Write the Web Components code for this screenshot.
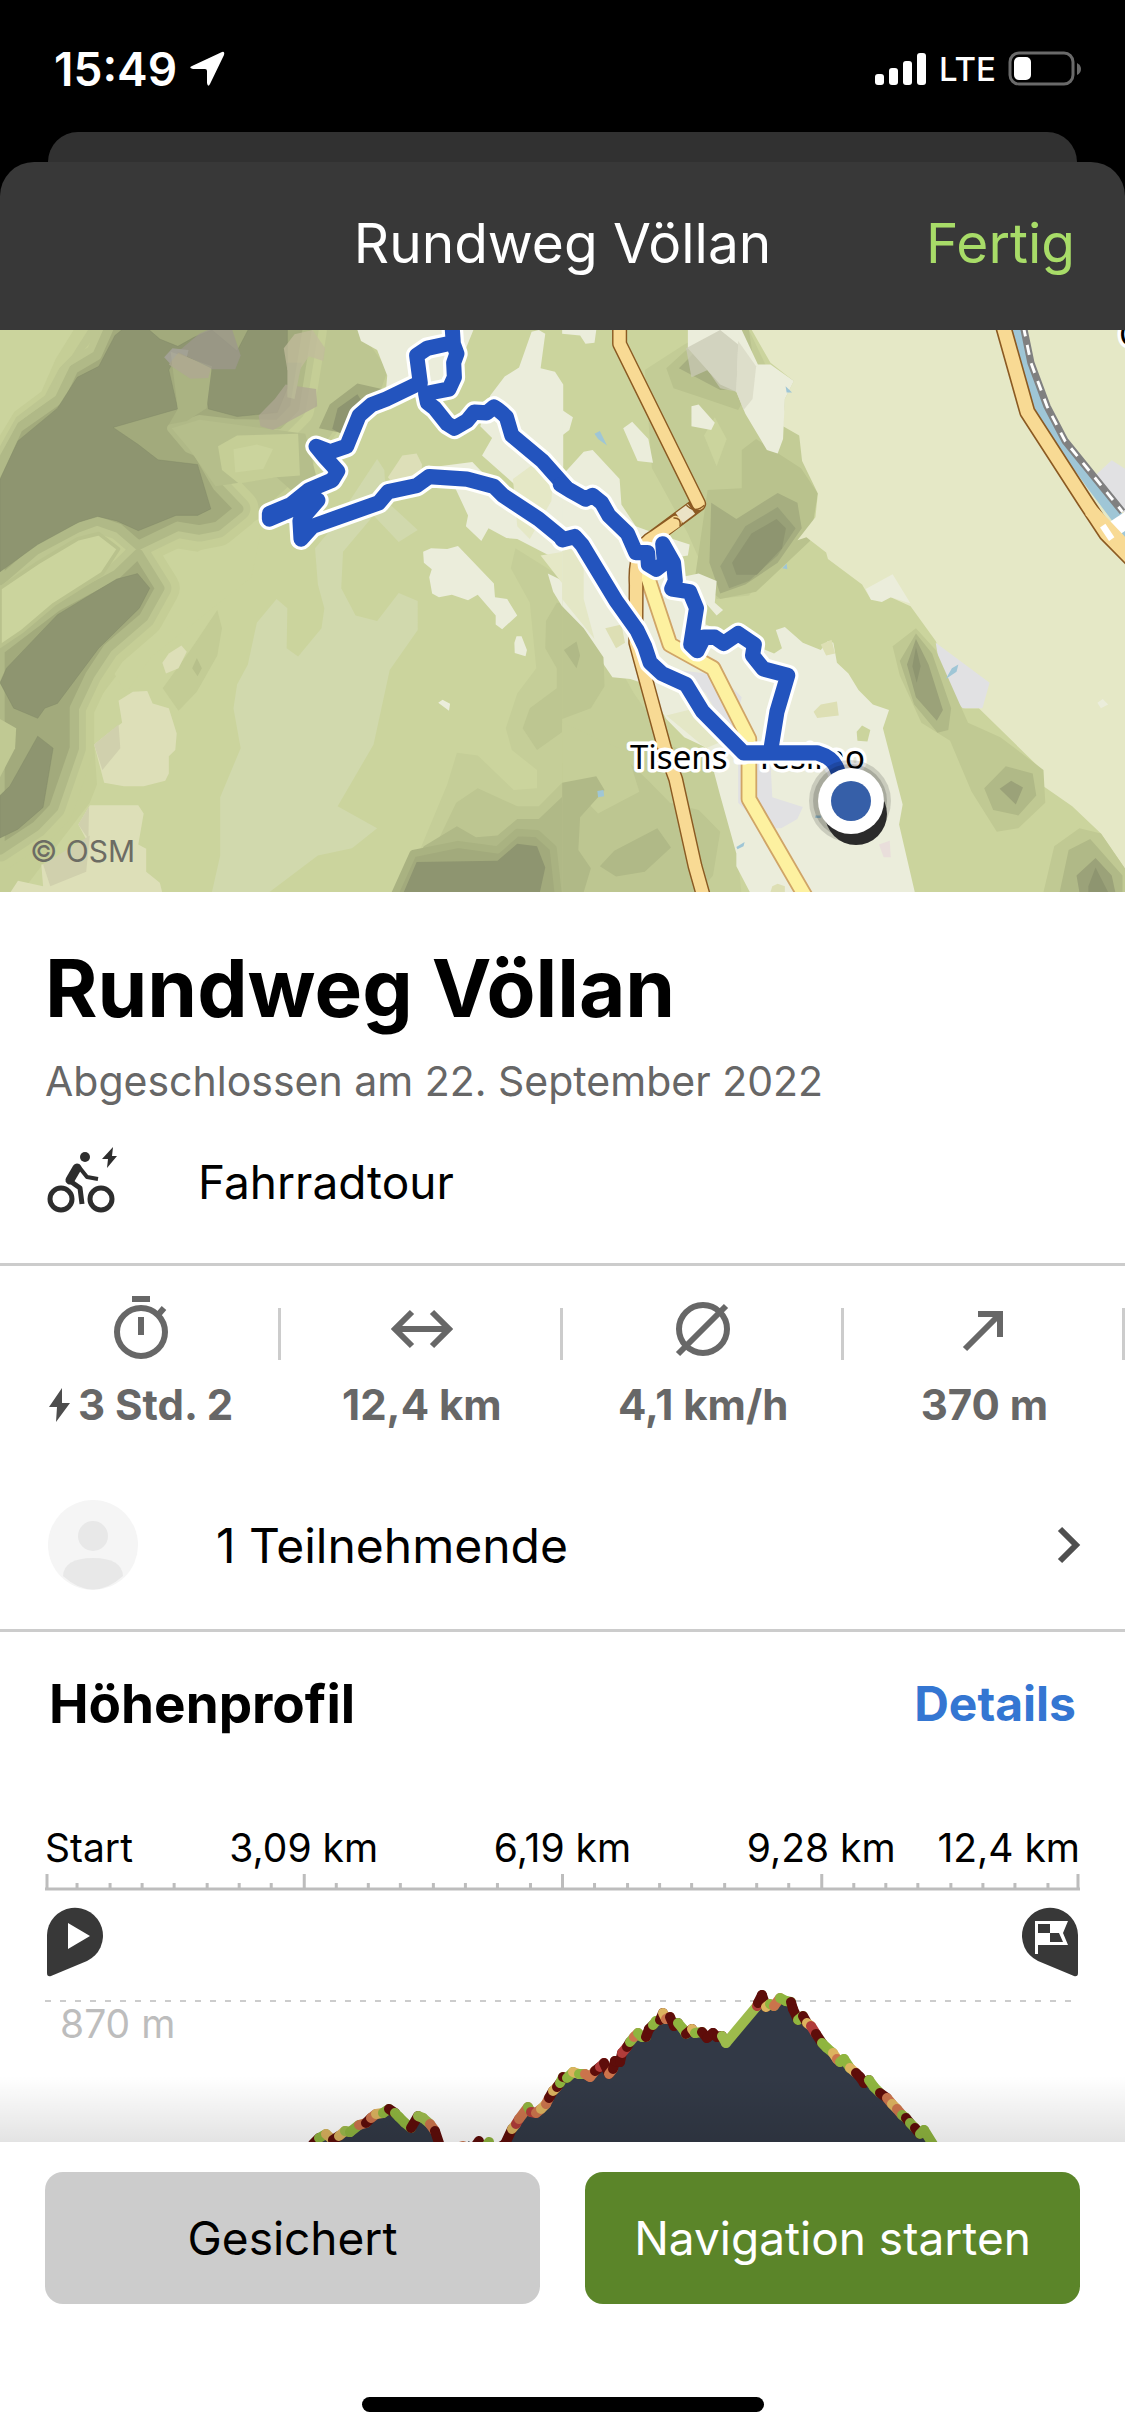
<!DOCTYPE html>
<html lang="de">
<head>
<meta charset="utf-8">
<meta name="viewport" content="width=device-width, initial-scale=1">
<title>Rundweg Völlan</title>
<style>
  html, body {
    margin: 0;
    height: 100%;
  }

  body {
    display: flex;
    flex-direction: column;
    background: #fff;
    color: #000;
    font-family: Inter, "Liberation Sans", sans-serif;
  }

  main {
    flex: 1;
    min-height: 0;
    overflow: hidden;
  }
</style>
</head>
<body>
  <phone-status>15:49</phone-status>
  <sheet-header>Rundweg Völlan<button slot="action">Fertig</button></sheet-header>
  <main>
    <tour-map></tour-map>
    <tour-summary>
      Rundweg Völlan
      <span slot="date">Abgeschlossen am 22. September 2022</span>
      <span slot="sport">Fahrradtour</span>
    </tour-summary>
    <tour-stats>
      <tour-stat icon="time" boost>3 Std. 2</tour-stat>
      <tour-stat icon="distance">12,4 km</tour-stat>
      <tour-stat icon="speed">4,1 km/h</tour-stat>
      <tour-stat icon="uphill">370 m</tour-stat>
    </tour-stats>
    <tour-people>1 Teilnehmende</tour-people>
    <elevation-profile>Höhenprofil<a slot="link" href="#details">Details</a></elevation-profile>
  </main>
  <action-bar>
    <button>Gesichert</button>
    <button class="primary">Navigation starten</button>
  </action-bar>

<script>
// tour.js

const define = (name, html, setup) => {
  const template = document.createElement('template')
  template.innerHTML = html
  customElements.define(name, class extends HTMLElement {
    constructor() {
      super()
      this.attachShadow({mode: 'open'})
      this.shadowRoot.appendChild(template.content.cloneNode(true))
    }

    connectedCallback() {
      if (setup) setup(this, this.shadowRoot)
    }
  })
}

define('phone-status', `
  <style>
    :host {
      display: flex;
      justify-content: space-between;
      align-items: center;
      box-sizing: border-box;
      height: 132px;
      padding: 6px 43px 0 54px;
      background: #000;
      color: #fff;
      font-size: 46px;
      font-weight: 600;
    }
    div { display: flex; align-items: center; gap: 12px; }
    .net { font-size: 33px; font-weight: 500; }
    svg { display: block; }
  </style>
  <div>
    <slot></slot>
    <svg width="36" height="36" viewBox="0 0 36 36" fill="#fff"><path d="M33 1Q36 0 35 4L21 33Q19 37 18 32V20Q18 18 16 18H4Q-1 17 3 15Z"/></svg>
  </div>
  <div class="net">
    <svg width="52" height="34" viewBox="0 0 52 34" fill="#fff">
      <rect y="22" width="9" height="11" rx="3"/><rect x="14" y="16" width="9" height="17" rx="3"/>
      <rect x="28" y="9" width="9" height="24" rx="3"/><rect x="42" y="1" width="9" height="32" rx="3"/>
    </svg>
    <span>LTE</span>
    <svg width="74" height="36" viewBox="0 0 74 36">
      <rect x="2" y="2" width="63" height="31" rx="9" fill="none" stroke="#6a6a6a" stroke-width="3"/>
      <rect x="6" y="6" width="17" height="23" rx="5" fill="#fff"/>
      <path d="M69 12Q73 14 73 18T69 24Z" fill="#6a6a6a"/>
    </svg>
  </div>
`)

define('sheet-header', `
  <style>
    :host { display: block; background: #000; font-size: 55px; color: #fff; }
    .behind { height: 30px; margin: 0 48px; border-radius: 30px 30px 0 0; background: #313131; }
    header {
      display: grid;
      grid-template-columns: 1fr auto 1fr;
      align-items: center;
      height: 162px;
      padding: 0 50px 6px;
      border-radius: 34px 34px 0 0;
      background: #383838;
    }
    h2 { grid-column: 2; margin: 0; font-size: inherit; font-weight: 400; }
    ::slotted(button) {
      justify-self: end;
      padding: 0;
      border: 0;
      background: none;
      color: #a8dc68;
      font: inherit;
    }
  </style>
  <div class="behind"></div>
  <header><h2><slot></slot></h2><slot name="action"></slot></header>
`)

// Terrain and route share one sheet of 3133 x 1546 units; the right half starts at 1565.
define('tour-map', `
  <style>
    :host { display: block; position: relative; height: 562px; overflow: hidden; background: #cbd49d; }
    svg { display: block; width: 100%; height: 100%; }
    small { position: absolute; left: 30px; bottom: 24px; font-size: 30px; line-height: 34px; color: #6c6c64; }
  </style>
  <svg viewBox="0 0 1125 562" preserveAspectRatio="xMidYMid slice" role="img" aria-label="Karte">
    <defs>
      <g id="route" fill="none" stroke-linejoin="round" stroke-linecap="round">
        <path d="M1575 432L1510 360 1425 290 1410 240Q1390 220 1375 212L1355 228 1320 226 1300 250 1265 270 1245 258 1210 215 1190 200 1185 175 1250 162 1265 130 1263 90 1272 65 1262 38 1258-20M1255 36L1190 50 1160 70 1170 145 1075 190 1035 205 1000 235 965 320 920 335 880 320 905 350 940 388 925 413 860 440 810 480 750 505V520L815 492 870 460 885 468 835 525 838 575 870 540 1055 475 1080 445 1160 428 1195 403 1300 410 1375 430 1400 455 1500 520 1568 575"/>
        <g transform="translate(1565)">
          <path d="M-5 425L20 440 65 465 85 455 110 475 130 510 182 560 205 612 238 612 240 645 262 658 285 640 280 588 310 640 315 690 305 712 355 720 374 765 358 865 376 882 395 845 425 845 450 862 490 835 535 865 530 895 560 932 628 950 598 1050 580 1160M0 577L35 568 55 590 150 745 208 825 230 870 245 915 278 945 345 975 390 1048 505 1163H710Q750 1175 762 1200L800 1290"/>
        </g>
      </g>
      <path id="nw" d="M0-20V380L50 270 165 190 205 108 270 70 310 -20H855V0L820 215 775 260 650 258 555 247 478 270 525 325 550 335 605 430 665 492 605 540 555 550 495 540 385 592 330 545 270 525 215 545 100 605 0 690Z"/>
      <path id="west" d="M0 880L160 760 325 672 385 615 445 710 400 790 300 875 250 950 207 1040V1150L150 1313 100 1365 0 1430Z"/>
      <path id="southeast" d="M1095 1560L1150 1440 1275 1415 1385 1430 1440 1382 1495 1385 1540 1425 1555 1560Z"/>
    </defs>
    <g transform="scale(.3592 .3636)" stroke-linejoin="round">
      <!-- relief west -->
      <path fill="#c5ce96" d="M0 0V1546H60L250 1300 270 1250 255 1040 340 930 460 800 520 650 735 510 820 440 1000 200 1080 150V0Z"/>
      <path fill="#cbd49d" d="M385 592L490 600 550 610 720 520 735 510 700 680 420 900 350 1000 310 930 455 710 460 660Z"/>
      <path fill="#bdc691" d="M560 0H1000L1080 110 1060 165 940 260 860 380 735 490 600 540 500 400Z"/>
      <g fill="none" stroke-width="110" stroke="#c5ce96"><use href="#nw"/><use href="#west"/></g>
      <g fill="none" stroke-width="64" stroke="#bdc691"><use href="#nw"/><use href="#west"/></g>
      <g stroke-width="26" stroke="#b0b987" fill="#a2aa7c"><use href="#nw"/><use href="#west"/></g>
      <path fill="#cbd49d" stroke="#b9c28d" stroke-width="10" d="M0 710L105 640 215 575 275 560 330 602 285 670 150 755 60 830 0 870Z"/>
      <path fill="#bdc691" d="M0 0H280L205 90 165 125 140 190 50 255 0 345Z"/>
      <path fill="#c5ce96" d="M0 0H245L200 70 165 105 125 180 45 240 0 320Z"/>
      <path fill="#cbd49d" d="M0 0H205L155 80 115 170 40 225 0 290Z"/>
      <path fill="#c0c993" d="M0 1070L45 1095 42 1150 0 1230Z"/>
      <g fill="#8e9570" stroke="#7f8765">
        <path d="M0 410L50 305 160 215 215 130 275 100 320 15 345-5H410L445 25 495 45 540 20 590 0 660 58 693-5H800V160L772 227 660 238 580 217 573 160 588 105 495 62 470 110 495 217 315 268 385 315 440 357 550 370 587 492 550 510 490 510 385 552 325 525 272 513 220 528 105 590 0 665Z"/>
        <path d="M325 685L383 670 417 710 388 765 275 875 160 1027 125 1040 105 1068 38 1040 0 970 18 930 160 783 240 735Z"/>
        <path d="M105 1117L148 1150 120 1313 50 1373 0 1397V1280L27 1255Z"/>
      </g>
      <path fill="#aab382" d="M475 60L590 100 575 215 520 250 470 260 495 217Z"/>
      <path fill="#b5be8b" d="M478 270L555 247 850 285 880 400 810 440 770 405 600 430 525 325Z"/>
      <path fill="#c5ce96" d="M607 320L660 290 830 285 835 400 770 405 665 422 618 385Z"/>
      <path fill="#cbd49d" d="M650 328L715 315 760 327 733 382 655 392Z"/>
      <path fill="#a2aa7c" d="M888 270L918 205 995 147 1075 165 1020 200 985 290Z"/>
      <path fill="#8e9570" d="M925 272L940 215 995 177 1010 200 960 290Z"/>
      <g fill="#b0a894" opacity=".75">
        <path fill="#9d988d" d="M495 60L555 10 590-5H645L670 70 655 108 590 108Z"/>
        <path fill="#a9a5a0" d="M457 75L480 50 525 55 520 75 480 100Z"/>
        <path d="M470 95L497 62 587 105 580 132 530 134Z"/>
        <path fill="#c2bc9c" d="M790 50L820 12 870 0 905 50 900 85 860 72 820 130 800 110Z"/>
        <path d="M720 235L765 190 795 150 880 162 883 210 760 275 725 265Z"/>
        <path fill="#bcb89c" d="M800 90H840L820 190 800 185Z"/>
      </g>
      <!-- valley floor -->
      <path fill="#d1d9ad" d="M770 740L800 765 798 875 830 898 895 820 903 765 885 700 877 600 920 550 1050 355 1070 385 1075 470 1163 550 1110 583 1040 510 955 610 950 710 990 785 1050 800 1110 723 1163 745V825L1085 935 1040 1140 940 1310 1050 1370 980 1425 885 1445 750 1546H590L613 1445V1285L670 1150 650 1040 660 975 690 920 715 805Z"/>
      <path fill="#c3cc95" d="M605 770L618 820 605 895 548 995 497 1047 453 985 530 880Z"/>
      <path fill="#b7c08b" d="M548 902L562 930 550 952 535 930Z"/>
      <path fill="#c5ce98" d="M1435 600L1580 690V1546H1120L1245 1250 1272 1163 1330 1170 1430 1265 1495 1260V1210L1425 1155 1408 1095 1440 1000 1493 930 1475 750 1422 655Z"/>
      <path fill="#bdc691" d="M1580 750H1550L1520 800 1518 875 1550 930V985L1475 1040 1455 1095 1495 1155 1580 1095Z"/>
      <path fill="#bdc691" d="M1270 1300L1330 1260 1440 1310H1500L1580 1230V1546H1150Z"/>
      <path fill="#b0b987" d="M1180 1420L1272 1365 1325 1395 1385 1390 1440 1345H1500L1580 1270V1546H1100Z"/>
      <g stroke-width="20" stroke="#a9b281" fill="#a2aa7c"><use href="#southeast"/></g>
      <path fill="#8e9570" d="M1118 1560L1160 1463 1385 1460 1440 1413 1495 1420 1518 1478 1500 1560Z"/>
      <g fill="#dddfb8">
        <path d="M330 1020L370 995 410 993 425 1027 470 1040 492 1110 488 1155 470 1172V1220L460 1240 400 1255H345L290 1245 262 1140 300 1110 340 1080Z"/>
        <path d="M250 1307H385L400 1330 385 1415 407 1427V1490L445 1520 455 1560H20L50 1515 120 1530 115 1470 180 1465 245 1410 218 1360Z"/>
        <path d="M452 915L470 890 505 868 520 885 497 930 462 945Z"/>
        <path d="M1080 405L1120 345 1160 340 1175 370 1170 420 1100 430Z"/>
      </g>
      <path fill="#d0d0ad" d="M262 1140L330 1085 335 1150 285 1210ZM120 1470L250 1390 240 1490 140 1530ZM218 1360L248 1310 246 1400Z"/>
      <!-- villages -->
      <g fill="#ebeddb">
        <path d="M995 0L1005 30 1050 55 1078 125 1075 160 1170 150 1180 190 1250 165 1320-5H995Z"/>
        <path d="M1480 5L1500 0 1518 10 1505 105 1545 115 1568 150V640L1440 575 1410 572 1360 545 1340 580 1297 540 1303 510 1265 430 1180 380 1315 363 1410 460 1450 440 1342 345 1370 297 1337 265 1365 180 1405 128 1445 103Z"/>
        <path d="M1178 610L1200 600 1245 602 1275 594 1375 697 1378 735 1412 740 1440 785 1398 823 1380 810V785L1330 728 1303 743 1258 728 1222 735 1203 725 1195 680 1202 658 1180 640Z"/>
        <path d="M1432 860L1438 842H1452L1467 880 1463 897 1433 888ZM1220 1025L1232 1017 1253 1028 1250 1047Z"/>
        <path d="M1525 670L1568 690V765L1540 720Z"/>
      </g>
      <path fill="#e5e8c6" d="M1428 410L1490 365 1540 400 1535 470 1475 575 1440 540ZM1505 620L1568 610V700Z"/>

      <g transform="translate(1565)">
        <path fill="#c5ce98" d="M0 690L120 860 200 1000 300 1140 420 1200 480 1350 500 1560H0Z"/>
        <path fill="#c3cc96" d="M230 110L340 40 420 0H520L660 290 712 450 650 575 520 730 430 740 350 560 250 380Z"/>
        <path fill="#cbd49d" d="M395 290L425 240 458 300 430 375Z"/>
        <path fill="#b9c28d" d="M290 105L340 60 420 0H520L540 130 490 220 400 190 310 160ZM500 330L540 300 665 380 712 450 690 580 540 720 440 740 370 680 405 440 500 435Z"/>
        <path fill="#a6ae80" d="M325 105L360 70 420 0H480L500 160 440 165ZM415 475L485 520 600 448 655 475 667 545 600 640 510 700 440 725 410 640Z"/>
        <path fill="#99a178" d="M440 650L510 540 600 487 650 545 600 620 520 690 465 710Z"/>
        <path fill="#8e9570" d="M473 640L527 560 597 520 623 545 612 600 542 673H485Z"/>
        <!-- meadows by the river -->
        <path fill="#e5e8c6" d="M525-5L580 90 645 140 620 190 615 265 660 290 668 360 712 450 705 515 655 578 680 570 735 612 740 630 835 700 860 742 915 735 970 760 1040 855 1120 1040H1160L1325 1200 1340 1255 1420 1310 1500 1385 1580 1500V-5Z"/>
        <path fill="#ebeddb" d="M0-5H60L95 0 90 35 65 38 50 15 0 10ZM0 220L30 240 20 275 0 290ZM360 210L380 205 425 255 415 275 360 265ZM170 270L195 252 240 300 253 365 210 360ZM270 0H350V50L440 150 485 170 510 230 570 330 600 340 615 300 620 190 645 140 580 95H545L500 0Z"/>
        <path fill="#c9c9b6" opacity=".75" d="M345 50L440 0 490 40 485 170 440 160 405 110 360 130Z"/>
        <path fill="#d9dac6" opacity=".8" d="M490 30L540 100 530 190 505 220 485 170Z"/>
        <path fill="#ebeddb" d="M0 400L60 335 85 330 160 410 165 480 205 540 260 560 355 590 350 620 320 625 330 680 380 670 430 690 425 750 448 770 430 785 395 745 400 810 590 890 612 875 595 825 620 817 670 860 720 880 740 855 755 860 765 915 797 945 825 990 865 1030 910 1045 893 1095 948 1305 938 1360 985 1560H530L485 1475V1440L440 1280 405 1150 340 1120 290 1070 235 975 190 960 140 955 95 890 0 760Z"/>
        <path fill="#e4e7c6" d="M0 560L60 620 60 740 90 850 0 740ZM290 1060L370 1040 450 1130 400 1150Z"/>
        <g fill="#e1e1e3">
          <path d="M325 935L440 950 500 1010 470 1120 400 1000ZM545 1160L580 1190 585 1285 670 1312 655 1345 610 1370H560L490 1300V1190ZM1040 860L1190 970 1170 1040H1115L1060 980ZM1490 395L1530 358 1580 390V520L1480 410Z"/>
        </g>
        <path fill="#ebeddb" d="M845 712L920 672 970 752 915 735 890 748 860 742ZM1490 1025L1505 1015 1520 1030 1500 1040Z"/>
        <path fill="#dddfb4" d="M700 1050L720 1030 765 1022 770 1060 710 1067ZM720 865L750 852 760 890 735 895ZM120 820L165 810 175 860 150 875ZM585 1530L600 1523 620 1530V1546H580Z"/>
        <path fill="#cbd49d" d="M820 1105L835 1088 858 1100 850 1132 822 1130Z"/>
        <path fill="#e9dedb" d="M882 1415L912 1405 915 1450 895 1450Z"/>
        <!-- hills -->
        <path fill="#bdc691" d="M0 760L60 820 115 900 118 980 80 1040 0 1070ZM0 1190L150 1155 240 1240 300 1300 380 1320 440 1380 420 1500 380 1546H0Z"/>
        <path fill="#c5ce98" d="M0 1080L180 1160 215 1270 100 1330 60 1290 0 1300Z"/>
        <path fill="#b0b987" d="M0 1245L95 1227 118 1265 50 1340 45 1430 80 1480 60 1546H0ZM5 880L40 857 50 895 40 930ZM105 1475L145 1432 265 1370 303 1423 230 1490 150 1503Z"/>
        <path fill="#c0c993" d="M920 870L985 820 1040 880 1130 1080 1220 1120 1340 1210 1345 1300 1270 1370 1210 1380 1140 1270 1080 1130 1000 1080 940 950ZM1340 1546L1370 1420 1440 1370 1500 1385 1580 1500V1546Z"/>
        <path fill="#b0b987" d="M940 910L985 835 1030 890 1083 1040 1075 1100 1045 1108 980 1030ZM1175 1260L1235 1200 1310 1220 1320 1280 1270 1335 1200 1320ZM1385 1546L1410 1430 1470 1400 1560 1500V1546Z"/>
        <path fill="#9ba279" d="M960 920L985 850 1020 920 1060 1045 1043 1075 985 1010ZM1218 1262L1250 1240 1283 1258 1263 1305ZM1432 1500L1485 1452 1530 1500 1540 1546H1440Z"/>
        <path fill="#8e9570" d="M975 925L985 872 998 925 987 970ZM1465 1530L1485 1478 1520 1546H1465Z"/>
        <path fill="#9fc6d6" d="M90 285L105 278 125 318 100 300ZM622 155L640 172 625 172ZM613 655L625 642 627 658ZM1085 930L1103 920 1098 940 1068 960ZM98 1268L115 1265 117 1282 100 1285ZM485 1422L508 1408 505 1420 488 1428ZM705 1335H720V1342H705Z"/>
        <!-- river, road and railway -->
        <path fill="none" stroke="#9fc6d6" stroke-width="34" d="M1262-10L1290 100 1330 210 1400 320 1480 430 1580 560"/>
        <path fill="none" stroke="#8b5a22" stroke-width="46" d="M1228-10L1295 225 1455 470 1515 560 1590 635"/>
        <path fill="none" stroke="#f8da94" stroke-width="37" d="M1228-10L1295 225 1455 470 1515 560 1590 635"/>
        <path fill="none" stroke="#808080" stroke-width="20" d="M1284-10L1305 90 1350 210 1400 305 1560 500"/>
        <path fill="none" stroke="#fff" stroke-width="8" stroke-dasharray="28 24" d="M1284-10L1305 90 1350 210 1400 305 1560 500"/>
        <path fill="none" stroke="#fff" stroke-width="44" d="M1538 545L1600 505"/>
        <path fill="none" stroke="#f8da94" stroke-width="38" d="M1470 495L1590 620"/>
        <path fill="none" stroke="#fff" stroke-width="18" d="M1505 538L1530 575"/>
        <!-- village roads -->
        <path fill="none" stroke="#d0a567" stroke-width="46" d="M228 650L300 865 420 930 520 1125V1290L690 1580"/>
        <path fill="none" stroke="#8b5a22" stroke-width="42" stroke-linecap="round" d="M160-20V38L380 478 255 570Q200 600 206 700L205 860 285 1150 316 1235 370 1475 400 1580"/>
        <path fill="none" stroke="#fdf1a0" stroke-width="36" d="M228 650L300 865 420 930 520 1125V1290L690 1580"/>
        <path fill="none" stroke="#f8da94" stroke-width="34" stroke-linecap="round" d="M160-20V38L380 478M316 528L255 570Q200 600 206 700L205 860 285 1150 316 1235 370 1475 400 1580"/>
        <path fill="none" stroke="#ebe3c6" stroke-width="34" d="M360 492L326 517"/>
        <path fill="none" stroke="#8b5a22" stroke-width="4" d="M346 482Q370 505 396 482M310 517Q332 515 328 540"/>
      </g>
    </g>
    <g font-family="'Noto Sans', sans-serif" font-size="33" stroke="#fff" stroke-width="7" paint-order="stroke" stroke-linejoin="round">
      <text x="630" y="439">Tisens - Tesimo</text>
      <text x="1119" y="16">G</text>
    </g>
    <g transform="scale(.3592 .3636)">
      <use href="#route" stroke="#fff" stroke-width="60"/>
      <use href="#route" stroke="#2354be" stroke-width="42"/>
    </g>
    <circle cx="850" cy="471" r="41" opacity=".14"/>
    <circle cx="850" cy="471" r="37" opacity=".16"/>
    <circle cx="856" cy="484" r="31" fill="#2b2b2b"/>
    <circle cx="851" cy="471" r="33" fill="#fff"/>
    <circle cx="851" cy="471" r="20" fill="#365fa8"/>
  </svg>
  <small>© OSM</small>
`)

define('tour-summary', `
  <style>
    :host { display: block; padding: 48px 45px 36px; border-bottom: 3px solid #ccc; }
    h1 { margin: 0; font-size: 80px; line-height: 96px; font-weight: 700; }
    p { margin: 18px 0 0; font-size: 41px; line-height: 54px; color: #676767; }
    .sport { display: flex; align-items: center; gap: 66px; margin-top: 29px; font-size: 46px; line-height: 90px; color: #000; }
  </style>
  <h1><slot></slot></h1>
  <p><slot name="date"></slot></p>
  <div class="sport">
    <svg width="87" height="90" viewBox="9 0 87 90" fill="none" stroke="#2d2d2d" stroke-width="5" stroke-linejoin="round">
      <circle cx="25" cy="62" r="11"/><circle cx="65" cy="62" r="11"/>
      <circle cx="49" cy="20" r="5" fill="#2d2d2d" stroke="none"/>
      <path d="M41 31L34 43" stroke-width="9" stroke-linecap="round"/>
      <path d="M34 44L44 51 46 67"/>
      <path d="M43 30L51 40 62 42" stroke-width="4"/>
      <path fill="#2d2d2d" stroke="none" d="M77 10L66 22H72L71 31 81 19H76Z"/>
    </svg>
    <slot name="sport"></slot>
  </div>
`)

define('tour-stats', `
  <style>
    :host { display: grid; grid-template-columns: repeat(4, 1fr); padding: 28px 0; }
  </style>
  <slot></slot>
`)

const statIcons = {
  time: '<circle cx="36" cy="38" r="24"/><path d="M27 5H45M36 23V41M53 21L59 14"/>',
  distance: '<path d="M10 35H62M26 18L9 35 26 52M46 18L63 35 46 52"/>',
  speed: '<circle cx="36" cy="35" r="24"/><path d="M11 60L59 12"/>',
  uphill: '<path d="M17 55L51 21M30 20H52V43"/>',
}

define('tour-stat', `
  <style>
    :host {
      display: flex;
      flex-direction: column;
      align-items: center;
      gap: 14px;
      color: #676767;
      background: linear-gradient(#ccc, #ccc) right 14px / 3px 52px no-repeat;
    }
    svg { display: block; fill: none; stroke: #676767; stroke-width: 6; }
    div { display: flex; align-items: center; gap: 6px; font-size: 42px; line-height: 50px; font-weight: 700; white-space: nowrap; }
    .bolt { display: none; fill: #4d4d4d; stroke: none; }
    :host([boost]) .bolt { display: block; }
  </style>
  <svg class="icon" width="72" height="72" viewBox="0 0 72 72"></svg>
  <div>
    <svg class="bolt" width="24" height="34" viewBox="0 0 24 34"><path d="M14 0L1 19H9L8 34 22 15H14Z"/></svg>
    <slot></slot>
  </div>
`, (host, root) => {
  root.querySelector('.icon').innerHTML = statIcons[host.getAttribute('icon')]
})

define('tour-people', `
  <style>
    :host { display: block; border-bottom: 3px solid #ccc; }
    a {
      display: flex;
      align-items: center;
      padding: 42px 42px 39px 48px;
      color: #000;
      font-size: 48px;
      text-decoration: none;
    }
    span { flex: 1; padding-left: 78px; }
    svg { display: block; }
  </style>
  <a href="#teilnehmende">
    <svg width="90" height="90" viewBox="0 0 90 90">
      <circle cx="45" cy="45" r="45" fill="#f5f5f5"/>
      <circle cx="45" cy="36" r="15" fill="#e8e8e8"/>
      <path d="M15 76Q16 58 45 58T75 76Q45 103 15 76Z" fill="#e8e8e8"/>
    </svg>
    <span><slot></slot></span>
    <svg width="30" height="42" viewBox="0 0 30 42" fill="none" stroke="#4f4f4f" stroke-width="6"><path d="M7 5L23 21 7 37"/></svg>
  </a>
`)

// x, y and grade of each point on the track; grade picks the segment colour
const track = `
  313,184,r 319,178,d 326,174,g 333,180,y 339,176,d 345,171,y 350,172,l 359,165,g 366,163,o 371,158,d 376,154,o
  383,153,y 389,149,g 395,153,d 399,157,g 405,163,g 411,168,g 418,156,d 423,158,l 430,164,l 435,171,o 439,183,d 443,192,n
  463,186,o 469,181,n 474,188,n 479,181,d 485,188,n 489,182,g 495,190,n 505,184,d 512,169,d 516,164,y 519,159,r 528,147,o
  531,152,g 536,153,r 541,149,o 546,144,y 549,138,o 553,131,d 557,127,y 560,123,d 563,117,g 567,118,d 573,112,g 579,114,y
  585,114,g 590,117,o 595,111,o 600,107,d 604,103,r 609,114,d 613,109,o 615,101,d 620,102,d 622,93,d 627,87,r 630,82,d
  634,77,g 638,73,o 642,77,g 646,77,g 649,69,d 653,65,d 656,61,g 660,60,g 663,53,d 666,59,y 670,57,o 674,66,d 678,63,d
  683,69,g 686,74,g 692,69,d 695,73,y 702,72,g 707,78,d 713,73,d 717,77,d 722,76,d 726,83,l 757,46,l 758,43,r 762,35,d
  766,47,d 770,44,y 774,46,g 780,38,o 786,41,g 791,42,g 793,49,d 798,60,d 803,56,g 807,63,d 811,66,y 816,74,r 822,83,d
  827,88,g 833,93,g 837,99,y 840,102,o 844,99,g 850,108,g 856,113,y 860,117,d 864,123,d 869,120,d 874,127,g 880,133,g
  887,138,d 892,144,o 897,149,y 902,155,o 906,158,g 910,163,d 915,168,g 920,174,d 924,170,g 934,186,g
`.trim().split(/\s+/).map(point => point.split(','))

const grades = {g: '#8fb53f', l: '#9dbb4c', y: '#dcb35f', o: '#cb744c', r: '#b13c3a', d: '#5e0d0a', n: 'none'}

define('elevation-profile', `
  <style>
    :host { display: block; padding: 39px 45px 0; }
    header { display: flex; justify-content: space-between; align-items: center; padding: 0 4px; line-height: 66px; }
    h2 { margin: 0; font-size: 53px; font-weight: 700; }
    ::slotted(a) { color: #3476d2; font-size: 48px; font-weight: 700; text-decoration: none; }
    .axis { display: grid; grid-template-columns: repeat(8, minmax(0, 1fr)); margin-top: 87px; font-size: 39px; line-height: 48px; white-space: nowrap; }
    .axis span { grid-column: span 2; text-align: center; }
    .axis .first { grid-column: span 1; text-align: left; }
    .axis .last { grid-column: span 1; justify-self: end; }
    svg { display: block; }
    .ruler { width: 100%; height: 17px; margin-top: 2px; }
    .pins { display: flex; justify-content: space-between; margin-top: 14px; }
    .chart { position: relative; margin: 17px -45px 0; height: 200px; }
    .chart svg { width: 100%; overflow: visible; }
    .chart span { position: absolute; left: 60px; top: 6px; color: #bdbdbd; font-size: 39px; line-height: 48px; }
  </style>
  <header><h2><slot></slot></h2><slot name="link"></slot></header>
  <div class="axis"><span class="first">Start</span><span>3,09 km</span><span>6,19 km</span><span>9,28 km</span><span class="last">12,4 km</span></div>
  <svg class="ruler" viewBox="0 0 1034 17" preserveAspectRatio="none" stroke="#bdbdbd" stroke-width="3" fill="none"></svg>
  <div class="pins">
    <svg width="60" height="72" viewBox="0 0 60 72">
      <path fill="#383838" d="M2 30A28 28 0 1 1 42 56L6 71Q2 72 2 68Z"/>
      <path fill="#fff" d="M23 18L45 31 23 44Z"/>
    </svg>
    <svg width="60" height="72" viewBox="0 0 60 72">
      <path fill="#383838" d="M58 30A28 28 0 1 0 18 56L54 71Q58 72 58 68Z"/>
      <path fill="#fff" d="M15 16H48L43 28 48 40H18V49H15ZM18 19V28H30V37H43L39 28H30V19Z" fill-rule="evenodd"/>
    </svg>
  </div>
  <div class="chart">
    <svg viewBox="0 34 1125 200" stroke-width="10" stroke-linecap="round" fill="none"></svg>
    <span>870 m</span>
  </div>
`, (host, root) => {
  let ticks = 'M0 15H1034'
  for (let i = 0; i <= 32; i++) {
    const x = Math.min(1032, Math.max(2, Math.round(i * 1034 / 32)))
    ticks += `M${x} ${i % 8 ? 9 : 0}V15`
  }
  root.querySelector('.ruler').innerHTML = `<path d="${ticks}"/>`

  const outline = track.map(([x, y]) => `${x} ${y}`).join('L')
  let chart = '<path stroke="#ccc" stroke-width="2" stroke-linecap="butt" stroke-dasharray="6 9" d="M45 41H1075"/>'
  chart += `<path fill="#323946" d="M${outline}V240H313Z"/>`
  for (let i = 1; i < track.length; i++) {
    const [x1, y1] = track[i - 1]
    const [x2, y2, grade] = track[i]
    chart += `<path stroke="${grades[grade]}" d="M${x1} ${y1}L${x2} ${y2}"/>`
  }
  root.querySelector('.chart svg').innerHTML = chart
})

define('action-bar', `
  <style>
    :host { display: block; position: relative; flex: none; background: #fff; }
    .shade {
      position: absolute;
      left: 0;
      right: 0;
      bottom: 100%;
      height: 66px;
      background: linear-gradient(rgba(0, 0, 0, 0), rgba(0, 0, 0, .11));
      pointer-events: none;
    }
    .buttons { display: grid; grid-template-columns: 1fr 1fr; gap: 45px; padding: 30px 45px 0; }
    ::slotted(button) {
      height: 132px;
      padding: 0;
      border: 0;
      border-radius: 18px;
      background: #ccc;
      color: #000;
      font: 46px Inter, "Liberation Sans", sans-serif;
    }
    ::slotted(.primary) { background: #5b8529; color: #fff; }
    .home { width: 402px; height: 15px; margin: 93px auto 24px; border-radius: 8px; background: #000; }
  </style>
  <div class="shade"></div>
  <div class="buttons"><slot></slot></div>
  <div class="home"></div>
`)
</script>
</body>
</html>
